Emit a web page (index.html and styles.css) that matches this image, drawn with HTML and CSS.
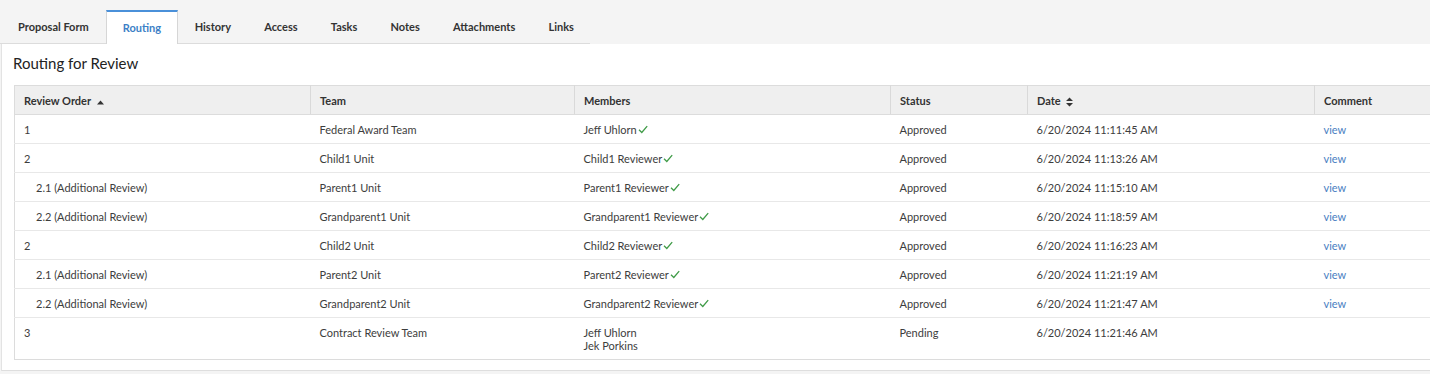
FILE: index.html
```html
<!DOCTYPE html>
<html lang="en">
<head>
    <meta charset="UTF-8">
    <meta name="viewport" content="width=device-width, initial-scale=1.0">
    <title>Routing</title>
    <link rel="stylesheet" href="styles.css">
</head>
<body>
    <nav class="tabs">
        <a class="tab">Proposal Form</a>
        <a class="tab active">Routing</a>
        <a class="tab">History</a>
        <a class="tab">Access</a>
        <a class="tab">Tasks</a>
        <a class="tab">Notes</a>
        <a class="tab">Attachments</a>
        <a class="tab">Links</a>
    </nav>
    <main class="panel">
        <h2>Routing for Review</h2>
        <table class="routing">
            <colgroup>
                <col style="width: 296px">
                <col style="width: 264px">
                <col style="width: 316px">
                <col style="width: 137px">
                <col style="width: 287px">
                <col>
            </colgroup>
            <thead>
                <tr>
                    <th>Review Order <svg class="sort" width="7" height="5" viewBox="0 0 7 5"><path d="M0 4.5 L3.5 0.5 L7 4.5 Z"/></svg></th>
                    <th>Team</th>
                    <th>Members</th>
                    <th>Status</th>
                    <th>Date <svg class="sort" width="7" height="10" viewBox="0 0 7 10"><path d="M0 4 L3.5 0.5 L7 4 Z M0 6 L3.5 9.5 L7 6 Z"/></svg></th>
                    <th>Comment</th>
                </tr>
            </thead>
            <tbody>
                <tr>
                    <td>1</td>
                    <td>Federal Award Team</td>
                    <td>Jeff Uhlorn<svg class="check" width="10" height="9" viewBox="0 0 10 9"><path d="M1 4.8 L3.8 7.5 L9.2 1.2"/></svg></td>
                    <td>Approved</td>
                    <td>6/20/2024 11:11:45 AM</td>
                    <td><a href="#">view</a></td>
                </tr>
                <tr>
                    <td>2</td>
                    <td>Child1 Unit</td>
                    <td>Child1 Reviewer<svg class="check" width="10" height="9" viewBox="0 0 10 9"><path d="M1 4.8 L3.8 7.5 L9.2 1.2"/></svg></td>
                    <td>Approved</td>
                    <td>6/20/2024 11:13:26 AM</td>
                    <td><a href="#">view</a></td>
                </tr>
                <tr>
                    <td class="sub">2.1 (Additional Review)</td>
                    <td>Parent1 Unit</td>
                    <td>Parent1 Reviewer<svg class="check" width="10" height="9" viewBox="0 0 10 9"><path d="M1 4.8 L3.8 7.5 L9.2 1.2"/></svg></td>
                    <td>Approved</td>
                    <td>6/20/2024 11:15:10 AM</td>
                    <td><a href="#">view</a></td>
                </tr>
                <tr>
                    <td class="sub">2.2 (Additional Review)</td>
                    <td>Grandparent1 Unit</td>
                    <td>Grandparent1 Reviewer<svg class="check" width="10" height="9" viewBox="0 0 10 9"><path d="M1 4.8 L3.8 7.5 L9.2 1.2"/></svg></td>
                    <td>Approved</td>
                    <td>6/20/2024 11:18:59 AM</td>
                    <td><a href="#">view</a></td>
                </tr>
                <tr>
                    <td>2</td>
                    <td>Child2 Unit</td>
                    <td>Child2 Reviewer<svg class="check" width="10" height="9" viewBox="0 0 10 9"><path d="M1 4.8 L3.8 7.5 L9.2 1.2"/></svg></td>
                    <td>Approved</td>
                    <td>6/20/2024 11:16:23 AM</td>
                    <td><a href="#">view</a></td>
                </tr>
                <tr>
                    <td class="sub">2.1 (Additional Review)</td>
                    <td>Parent2 Unit</td>
                    <td>Parent2 Reviewer<svg class="check" width="10" height="9" viewBox="0 0 10 9"><path d="M1 4.8 L3.8 7.5 L9.2 1.2"/></svg></td>
                    <td>Approved</td>
                    <td>6/20/2024 11:21:19 AM</td>
                    <td><a href="#">view</a></td>
                </tr>
                <tr>
                    <td class="sub">2.2 (Additional Review)</td>
                    <td>Grandparent2 Unit</td>
                    <td>Grandparent2 Reviewer<svg class="check" width="10" height="9" viewBox="0 0 10 9"><path d="M1 4.8 L3.8 7.5 L9.2 1.2"/></svg></td>
                    <td>Approved</td>
                    <td>6/20/2024 11:21:47 AM</td>
                    <td><a href="#">view</a></td>
                </tr>
                <tr>
                    <td>3</td>
                    <td>Contract Review Team</td>
                    <td>Jeff Uhlorn<br>Jek Porkins</td>
                    <td>Pending</td>
                    <td>6/20/2024 11:21:46 AM</td>
                    <td></td>
                </tr>
            </tbody>
        </table>
    </main>
</body>
</html>
```

FILE: styles.css
```css
body {
    font-family: Lato, "Open Sans", sans-serif;
    margin: 0;
    padding: 10px 0 0;
    background-color: #f4f4f4;
    color: #3d3d3d;
    font-size: 11px;
    overflow: hidden;
}

.tabs {
    display: flex;
    height: 34px;
}

.tab {
    padding: 0 16.6px;
    line-height: 33px;
    font-weight: bold;
    color: #333;
    border-bottom: 1px solid #dcdcdc;
    cursor: pointer;
}

.tab:first-child {
    padding-left: 18px;
    padding-right: 17px;
}

.tab.active {
    background-color: #fff;
    color: #3c7fc6;
    border: 1px solid #d6d6d6;
    border-top: 2px solid #4a90d9;
    border-bottom: none;
    line-height: 32px;
    padding: 0 16px;
}

.panel {
    background-color: #fff;
    margin-left: 1px;
    border-left: 1px solid #e3e3e3;
    border-bottom: 1px solid #dedede;
    padding: 9px 0 10px 12px;
}

h2 {
    margin: 0 0 12px -1px;
    font-size: 15px;
    font-weight: normal;
    line-height: 20px;
    color: #222;
}

.routing {
    width: 1430px;
    border-collapse: collapse;
    table-layout: fixed;
    border: 1px solid #dcdcdc;
}

.routing th,
.routing td {
    text-align: left;
    vertical-align: top;
    padding: 8px 9px 7px;
    line-height: 13px;
}

.routing th {
    background-color: #efefef;
    font-weight: bold;
    color: #333;
    border-left: 1px solid #d9d9d9;
    border-bottom: 1px solid #dcdcdc;
}

.routing th:first-child {
    border-left: none;
}

.routing td {
    border-top: 1px solid #e8e8e8;
}

.routing td.sub {
    padding-left: 21px;
}

.sort {
    fill: #333;
    margin-left: 3px;
    vertical-align: middle;
}

.check {
    fill: none;
    stroke: #3f9b47;
    stroke-width: 1.3;
    margin-left: 1px;
    vertical-align: 0;
}

a {
    color: #4a80c2;
    text-decoration: none;
}
```
